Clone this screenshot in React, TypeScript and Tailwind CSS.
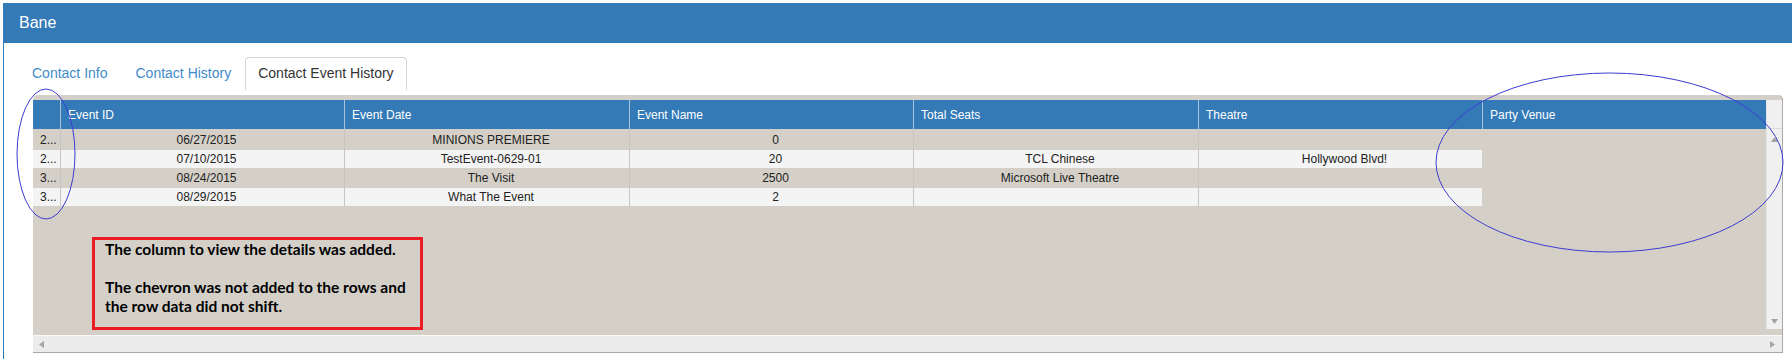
import React from 'react'

const rows = [
  { id: '2...', cells: ['06/27/2015', 'MINIONS PREMIERE', '0', '', ''], light: false, h: 'h-[21px]' },
  { id: '2...', cells: ['07/10/2015', 'TestEvent-0629-01', '20', 'TCL Chinese', 'Hollywood Blvd!'], light: true, h: 'h-[18px]' },
  { id: '3...', cells: ['08/24/2015', 'The Visit', '2500', 'Microsoft Live Theatre', ''], light: false, h: 'h-[20px]' },
  { id: '3...', cells: ['08/29/2015', 'What The Event', '2', '', ''], light: true, h: 'h-[18px]' },
]

const headers = ['Event ID', 'Event Date', 'Event Name', 'Total Seats', 'Theatre', 'Party Venue']

function Arrow({ dir }: { dir: 'up' | 'down' | 'left' | 'right' }) {
  const pts = {
    up: '0,5 7,5 3.5,0',
    down: '0,0 7,0 3.5,5',
    left: '5,0 5,7 0,3.5',
    right: '0,0 0,7 5,3.5',
  }[dir]
  const w = dir === 'up' || dir === 'down' ? 7 : 5
  const h = dir === 'up' || dir === 'down' ? 5 : 7
  return (
    <svg width={w} height={h} viewBox={`0 0 ${w} ${h}`}>
      <polygon points={pts} fill="#a4a4a4" />
    </svg>
  )
}

export default function App() {
  return (
    <div className="relative h-[359px] overflow-hidden bg-white pt-[3px] pl-[3px] font-['Liberation_Sans',Arial,sans-serif]">
      <div className="h-[356px] border-l border-[#337ab7]">
        {/* Panel heading */}
        <div className="flex h-10 items-center bg-[#337ab7] pl-[15px] text-base text-white">Bane</div>

        <div className="pl-[29px] pt-[15px]">
          {/* Tabs */}
          <div className="ml-[-15px] flex h-8 items-end text-sm leading-4">
            <div className="border border-transparent px-[13px] pt-[7px] pb-[8px] text-[#428bca]">Contact Info</div>
            <div className="border border-transparent px-[13px] pt-[7px] pb-[8px] text-[#428bca]">Contact History</div>
            <div className="rounded-t-[4px] border border-b-0 border-[#d6d6d6] bg-white px-[12px] pt-[7px] pb-[9px] text-[#333]">
              Contact Event History
            </div>
          </div>

          {/* Grid */}
          <div className="mt-[5px] w-[1750px] rounded-t-[5px] border-r border-b border-[#a8a8a8] bg-[#d4d0c8] pt-[5px] text-xs">
            <div className="flex">
              <div className="w-[1733px]">
                <div className="grid h-[29px] grid-cols-[27px_284px_285px_284px_285px_284px_284px] bg-[#337ab7] text-white">
                  <div />
                  {headers.map(h => (
                    <div key={h} className="flex items-center border-l border-[#a9c3dc] pl-[7px]">{h}</div>
                  ))}
                </div>
                <div className="h-[206px]">
                  {rows.map((r, i) => (
                    <div
                      key={i}
                      className={`grid w-[1449px] grid-cols-[27px_284px_285px_284px_285px_284px] text-[#222] ${r.h} ${r.light ? 'bg-[#f4f4f4]' : 'bg-[#d4d0c8]'}`}
                    >
                      <div className="flex items-center pl-[7px]">{r.id}</div>
                      {r.cells.map((c, j) => (
                        <div key={j} className="flex items-center justify-center border-l border-[#c6c6c6] pl-2">{c}</div>
                      ))}
                    </div>
                  ))}
                </div>
              </div>
              {/* Vertical scrollbar */}
              <div className="w-4">
                <div className="flex h-[229px] flex-col border-l border-[#e4e4e4] bg-[#f0f0f0]">
                  <div className="h-[29px] border-b border-[#dcdcdc]" />
                  <div className="flex justify-center pt-[8px]"><Arrow dir="up" /></div>
                  <div className="flex-1" />
                  <div className="flex justify-center pb-[5px]"><Arrow dir="down" /></div>
                </div>
              </div>
            </div>
            {/* Horizontal scrollbar */}
            <div className="flex h-[17px] items-center justify-between border-t border-[#f8f8f8] bg-[#ececec] pl-[6px] pr-[7px]">
              <Arrow dir="left" />
              <Arrow dir="right" />
            </div>
          </div>
        </div>
      </div>

      {/* Annotation: red note box */}
      <div className="absolute top-[237px] left-[92px] h-[93px] w-[331px] border-[3px] border-[#ed1c24] pl-[10px] font-['Lato','Open_Sans',sans-serif] text-[15.5px] leading-[19px] font-bold text-black">
        <p>The column to view the details was added.</p>
        <p>&nbsp;</p>
        <p>The chevron was not added to the rows and</p>
        <p>the row data did not shift.</p>
      </div>

      {/* Annotation: blue ellipses */}
      <svg className="pointer-events-none absolute inset-0" width="1792" height="359">
        <ellipse cx="46" cy="154" rx="29" ry="65" fill="none" stroke="#3c3cd4" strokeWidth="1" />
        <ellipse cx="1609.5" cy="162.5" rx="173.5" ry="89.5" fill="none" stroke="#3c3cd4" strokeWidth="1" />
      </svg>
    </div>
  )
}
